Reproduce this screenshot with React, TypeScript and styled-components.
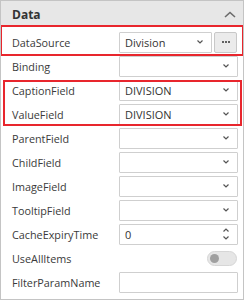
import React from "react"
import styled, { createGlobalStyle } from "styled-components"

type Field = {
  label: string
  kind: "select" | "number" | "toggle" | "text" | "source"
  value?: string
}

const groups: { highlight?: "wide" | "narrow"; fields: Field[] }[] = [
  { highlight: "wide", fields: [{ label: "DataSource", kind: "source", value: "Division" }] },
  { fields: [{ label: "Binding", kind: "select" }] },
  {
    highlight: "narrow",
    fields: [
      { label: "CaptionField", kind: "select", value: "DIVISION" },
      { label: "ValueField", kind: "select", value: "DIVISION" },
    ],
  },
  {
    fields: [
      { label: "ParentField", kind: "select" },
      { label: "ChildField", kind: "select" },
      { label: "ImageField", kind: "select" },
      { label: "TooltipField", kind: "select" },
      { label: "CacheExpiryTime", kind: "number", value: "0" },
      { label: "UseAllItems", kind: "toggle" },
      { label: "FilterParamName", kind: "text" },
    ],
  },
]

const Chevron = ({ up }: { up?: boolean }) => (
  <svg width="6" height="4" viewBox="0 0 6 4">
    <polyline
      points={up ? "0.5,3.5 3,1 5.5,3.5" : "0.5,0.5 3,3 5.5,0.5"}
      fill="none"
      stroke="#555"
      strokeWidth="1.2"
    />
  </svg>
)

const Editor = ({ field }: { field: Field }) => {
  switch (field.kind) {
    case "source":
      return (
        <SourceWrap>
          <Box>
            <span>{field.value}</span>
            <Chevron />
          </Box>
          <DotsButton>
            <Dot />
            <Dot />
            <Dot />
          </DotsButton>
        </SourceWrap>
      )
    case "select":
      return (
        <Box>
          <span>{field.value}</span>
          <Chevron />
        </Box>
      )
    case "number":
      return (
        <Box>
          <span>{field.value}</span>
          <Spinner>
            <Chevron up />
            <Chevron />
          </Spinner>
        </Box>
      )
    case "toggle":
      return (
        <ToggleCell>
          <Track>
            <Knob />
          </Track>
        </ToggleCell>
      )
    default:
      return <Box />
  }
}

const App = () => {
  return (
    <>
      <GlobalStyle />
      <Panel>
        <Header>
          <HeaderTitle>Data</HeaderTitle>
          <svg width="12" height="7" viewBox="0 0 12 7">
            <polyline points="1,6 6,1.5 11,6" fill="none" stroke="#6b6b6b" strokeWidth="1.6" />
          </svg>
        </Header>
        <List>
          {groups.map((g, i) => (
            <Group key={i} highlight={g.highlight}>
              {g.fields.map(f => (
                <Row key={f.label}>
                  <Label>{f.label}</Label>
                  <Editor field={f} />
                </Row>
              ))}
            </Group>
          ))}
        </List>
      </Panel>
    </>
  )
}

export default App

const GlobalStyle = createGlobalStyle`
  body {
    margin: 0;
    background: #ffffff;
    font-family: "Open Sans", "Noto Sans", sans-serif;
  }
`

const Panel = styled.div`
  width: 242px;
  height: 298px;
  border: 1px solid #c4c4c4;
  background: #ffffff;
  overflow: hidden;
`

const Header = styled.div`
  height: 26px;
  background: #e7e7e7;
  display: flex;
  align-items: center;
  justify-content: space-between;
  padding: 0 7px 0 11px;
`

const HeaderTitle = styled.span`
  font-size: 12px;
  font-weight: 700;
  color: #333333;
`

const List = styled.div`
  padding-top: 3px;
`

const Group = styled.div<{ highlight?: "wide" | "narrow" }>`
  position: relative;

  &::after {
    content: "";
    display: ${p => (p.highlight ? "block" : "none")};
    position: absolute;
    pointer-events: none;
    border: 2px solid #e8262d;
    top: ${p => (p.highlight === "wide" ? "-5px" : "2px")};
    bottom: ${p => (p.highlight === "wide" ? "-2px" : "0px")};
    left: ${p => (p.highlight === "wide" ? "-1px" : "2px")};
    right: ${p => (p.highlight === "wide" ? "-1px" : "1px")};
  }
`

const Row = styled.div`
  height: 24px;
  display: grid;
  grid-template-columns: 1fr 119px;
  align-items: center;
  padding: 0 5px 0 11px;
`

const Label = styled.span`
  font-size: 10.8px;
  color: #3a3a3a;
  white-space: nowrap;
`

const Box = styled.div`
  height: 21px;
  box-sizing: border-box;
  border: 1px solid #cfcfcf;
  border-radius: 1px;
  background: #ffffff;
  display: flex;
  align-items: center;
  justify-content: space-between;
  padding: 0 8px 0 5px;
  font-size: 11px;
  color: #333333;
  min-width: 0;
`

const SourceWrap = styled.div`
  display: grid;
  grid-template-columns: 1fr 23px;
  gap: 2px;
  padding-right: 1px;
`

const DotsButton = styled.div`
  height: 21px;
  box-sizing: border-box;
  border: 1px solid #c8c8c8;
  border-radius: 2px;
  background: #ebebeb;
  display: flex;
  align-items: center;
  justify-content: center;
  gap: 1px;
`

const Dot = styled.span`
  width: 2px;
  height: 2px;
  border-radius: 50%;
  background: #333333;
`

const Spinner = styled.div`
  display: flex;
  flex-direction: column;
  gap: 4px;
`

const ToggleCell = styled.div`
  display: flex;
  justify-content: flex-end;
  padding-right: 1px;
`

const Track = styled.div`
  width: 30px;
  height: 15px;
  box-sizing: border-box;
  border: 1px solid #d6d6d6;
  border-radius: 8px;
  background: #e6e6e6;
  display: flex;
  align-items: center;
  padding-left: 2px;
`

const Knob = styled.div`
  width: 9px;
  height: 9px;
  border-radius: 50%;
  background: #a0a0a0;
`
